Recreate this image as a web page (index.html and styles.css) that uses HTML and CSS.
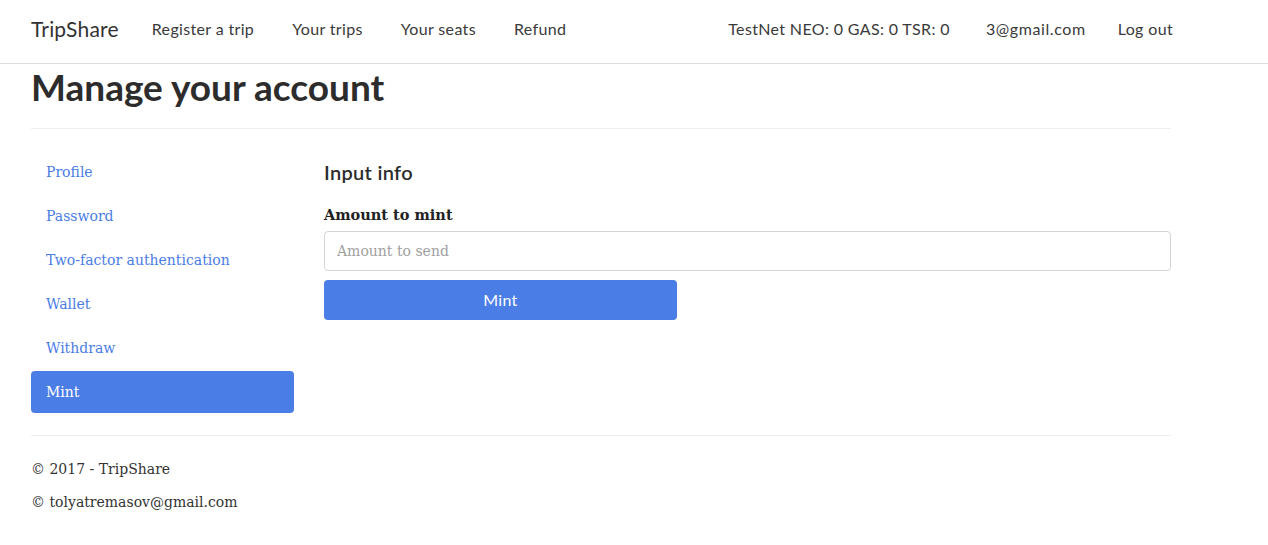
FILE: index.html
```html
<!DOCTYPE html>
<html lang="en">
<head>
<meta charset="utf-8">
<title>Manage your account - TripShare</title>
<link rel="stylesheet" href="styles.css">
</head>
<body>
<header class="navbar">
  <div class="nav-inner">
    <a class="brand" href="#">TripShare</a>
    <nav class="nav-left">
      <a href="#">Register a trip</a>
      <a href="#">Your trips</a>
      <a href="#">Your seats</a>
      <a href="#">Refund</a>
    </nav>
    <div class="nav-right">
      <span class="balance">TestNet NEO: 0 GAS: 0 TSR: 0</span>
      <a class="email" href="#">3@gmail.com</a>
      <a class="logout" href="#">Log out</a>
    </div>
  </div>
</header>
<main class="container">
  <h1 class="page-title">Manage your account</h1>
  <hr class="divider">
  <div class="row">
    <aside class="side">
      <ul class="pills">
        <li><a href="#">Profile</a></li>
        <li><a href="#">Password</a></li>
        <li><a href="#">Two-factor authentication</a></li>
        <li><a href="#">Wallet</a></li>
        <li><a href="#">Withdraw</a></li>
        <li class="active"><a href="#">Mint</a></li>
      </ul>
    </aside>
    <section class="content">
      <h4 class="section-title">Input info</h4>
      <form class="form">
        <label class="label" for="amount">Amount to mint</label>
        <input class="input" id="amount" type="text" placeholder="Amount to send">
        <button class="btn" type="button">Mint</button>
      </form>
    </section>
  </div>
  <hr class="divider footer-line">
  <footer class="footer">
    <p>© 2017 - TripShare</p>
    <p>© tolyatremasov@gmail.com</p>
  </footer>
</main>
</body>
</html>
```
FILE: styles.css
```css
* { box-sizing: border-box; }
html, body { margin: 0; padding: 0; background: #fff; }
body {
  font-family: "DejaVu Serif", Georgia, serif;
  font-size: 14px;
  color: #333;
}
a { text-decoration: none; }

.navbar {
  height: 64px;
  border-bottom: 1px solid #ddd;
}
.nav-inner {
  height: 57px;
  display: flex;
  align-items: center;
  padding: 0 31px;
  font-family: Lato, "Open Sans", sans-serif;
  letter-spacing: 0.35px;
}
.brand {
  font-size: 21px;
  color: #333;
  margin-right: 33px;
  letter-spacing: 0.2px;
}
.nav-left, .nav-right {
  display: flex;
  align-items: center;
}
.nav-left a, .nav-right a, .nav-right span {
  font-size: 16px;
  color: #3a3a3a;
}
.nav-left a { margin-right: 38px; }
.nav-right { margin-left: auto; margin-right: 64px; }
.nav-right .email { margin-left: 36px; letter-spacing: 0.6px; }
.nav-right .logout { margin-left: 32px; }

.container {
  width: 1140px;
  margin-left: 31px;
}
.page-title {
  font-family: Lato, "Open Sans", sans-serif;
  font-weight: 700;
  font-size: 37px;
  line-height: 1.1;
  margin: 3px 0 0;
  color: #2c2c2c;
}
.divider {
  border: 0;
  border-top: 1px solid #eee;
  margin: 20px 0 22px;
}
.row {
  display: flex;
  gap: 30px;
}
.side { width: 263px; flex: none; }
.pills {
  list-style: none;
  margin: 0;
  padding: 0;
}
.pills li { margin-bottom: 2px; }
.pills a {
  display: block;
  height: 42px;
  line-height: 42px;
  padding: 0 15px;
  border-radius: 4px;
  color: #4a7de6;
}
.pills .active a {
  background: #4a7de6;
  color: #fff;
}
.content { flex: 1; }
.section-title {
  font-family: Lato, "Open Sans", sans-serif;
  font-weight: 600;
  font-size: 20px;
  letter-spacing: 0.3px;
  margin: 9px 0 22px;
  color: #2c2c2c;
}
.form { display: flex; flex-direction: column; align-items: flex-start; }
.label {
  font-weight: 700;
  font-size: 14.5px;
  margin-bottom: 8px;
  color: #222;
}
.input {
  width: 100%;
  height: 40px;
  border: 1px solid #d5d5d5;
  border-radius: 4px;
  padding: 0 12px;
  font-family: "DejaVu Serif", Georgia, serif;
  font-size: 14px;
  color: #333;
}
.input::placeholder { color: #a0a0a0; }
.btn {
  margin-top: 9px;
  width: 353px;
  height: 40px;
  border: 0;
  border-radius: 4px;
  background: #4a7de6;
  color: #fff;
  font-family: Lato, "Open Sans", sans-serif;
  font-size: 16px;
  letter-spacing: 0.3px;
}
.footer-line { margin: 20px 0 23px; }
.footer p {
  margin: 0 0 13px;
  line-height: 20px;
  font-size: 14px;
}
```
